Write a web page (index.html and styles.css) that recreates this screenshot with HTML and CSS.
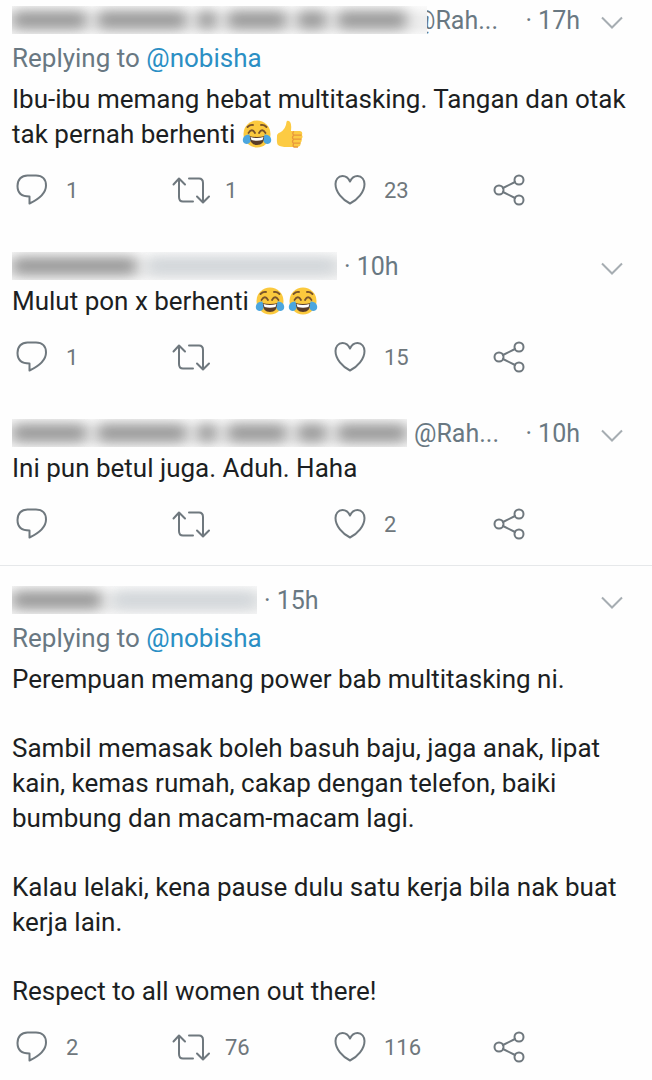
FILE: index.html
```html
<!DOCTYPE html>
<html lang="ms">
<head>
<meta charset="utf-8">
<meta name="viewport" content="width=device-width, initial-scale=1">
<title>Replies</title>
<link rel="stylesheet" href="styles.css">
</head>
<body>
<svg class="sprite" aria-hidden="true">
  <symbol id="reply" viewBox="0 0 40 36"><path d="M15.500 3.500H24C30.500 3.500 34 7.500 34 13.500C34 22 26 27.500 17.500 31.500V24.500C9 24.500 5.500 20 5.500 14C5.500 7.500 9.500 3.500 15.500 3.500Z"/></symbol>
  <symbol id="retweet" viewBox="0 0 40 36"><path d="M2.500 12.500L8 6.500L14 12.500M8 7V25Q8 29.500 12 29.500H22M18 6.500H28Q32 6.500 32 11V29M26 24.500L32 30.500L38 24.500"/></symbol>
  <symbol id="heart" viewBox="0 0 40 36"><path d="M20 9.500C22 5 25 4 27.500 4C32 4 34.500 8 34.500 12C34.500 20 27.500 28 20 31.500C12.500 28 5.500 20 5.500 12C5.500 8 8 4 12.500 4C15 4 18 5 20 9.500Z"/></symbol>
  <symbol id="share" viewBox="0 0 40 36"><circle cx="10" cy="18" r="4.500"/><circle cx="30" cy="8" r="4.500"/><circle cx="30" cy="28" r="4.500"/><path d="M14 16L26 10M14 20L26 26"/></symbol>
  <symbol id="chevron" viewBox="0 0 24 36"><path d="M2 15.500L12 25.500L22 15.500"/></symbol>
  <symbol id="joy" viewBox="0 0 30 30">
    <circle cx="15" cy="15" r="13.500" fill="#fbc93d"/>
    <path d="M5.500 8Q8 5.500 11 6M19 6Q22 5.500 24.500 8M6.500 14Q10 8.500 13 14M17 14Q20 8.500 23.500 14" fill="none" stroke="#79532b" stroke-width="1.800" stroke-linecap="round"/>
    <path d="M7 17Q15 19 23 17Q22 26 15 26Q8 26 7 17Z" fill="#593c29"/>
    <path d="M8.500 18Q15 20 21.500 18L20.500 21Q15 22.500 9.500 21Z" fill="#fff"/>
    <path d="M7.500 15.500C3 15 0 19 1 22.500C2 26 8 26 8.500 21.500Z" fill="#4ba6df"/>
    <path d="M22.500 15.500C27 15 30 19 29 22.500C28 26 22 26 21.500 21.500Z" fill="#4ba6df"/>
  </symbol>
  <symbol id="thumb" viewBox="0 0 30 30">
    <path d="M11.500 3Q12 1 14 2Q17 3.500 16 12H25Q28 12.500 27 16Q28.500 18 26.500 20Q27.500 22.500 25.500 24Q26 27.500 22.500 28H12Q6 28 3 26Q1.500 25 2 17Q2 14.500 5 13.500Q11 10 11.500 3Z" fill="#fccb43"/>
    <path d="M26.500 16.200H19Q16.500 14 19 12.500M26.500 20.200H18.500Q16.500 18.500 18.500 16.500M25.500 24.200H18.500Q16.500 22.500 18.500 20.500M18.500 24.500Q17.500 26.500 19 28H23" fill="none" stroke="#e8973b" stroke-width="1.300"/>
  </symbol>
</svg>
<main class="thread">
  <article class="tweet">
    <header class="head">
      <span class="redacted redacted-over"><i class="w75"></i><i class="w90"></i><i class="w20"></i><i class="w60"></i><i class="w30"></i><i class="w70"></i></span>
      <span class="handle">@Rah...</span>
      <span class="time time-end">· 17h</span>
      <button class="more" aria-label="More"><svg><use href="#chevron"/></svg></button>
    </header>
    <p class="replying">Replying to <a href="#">@nobisha</a></p>
    <div class="text"><p>Ibu-ibu memang hebat multitasking. Tangan dan otak tak pernah berhenti <svg class="emoji" role="img" aria-label="Tears of joy"><use href="#joy"/></svg><svg class="emoji" role="img" aria-label="Thumbs up"><use href="#thumb"/></svg></p></div>
    <div class="actions">
      <button aria-label="Reply"><svg><use href="#reply"/></svg><span>1</span></button>
      <button aria-label="Retweet"><svg><use href="#retweet"/></svg><span>1</span></button>
      <button aria-label="Like"><svg><use href="#heart"/></svg><span>23</span></button>
      <button aria-label="Share"><svg><use href="#share"/></svg></button>
    </div>
  </article>

  <article class="tweet">
    <header class="head">
      <span class="redacted"><i class="w125"></i><i class="w190 pale"></i></span>
      <span class="time">· 10h</span>
      <button class="more" aria-label="More"><svg><use href="#chevron"/></svg></button>
    </header>
    <div class="text"><p>Mulut pon x berhenti <svg class="emoji" role="img" aria-label="Tears of joy"><use href="#joy"/></svg><svg class="emoji" role="img" aria-label="Tears of joy"><use href="#joy"/></svg></p></div>
    <div class="actions">
      <button aria-label="Reply"><svg><use href="#reply"/></svg><span>1</span></button>
      <button aria-label="Retweet"><svg><use href="#retweet"/></svg></button>
      <button aria-label="Like"><svg><use href="#heart"/></svg><span>15</span></button>
      <button aria-label="Share"><svg><use href="#share"/></svg></button>
    </div>
  </article>

  <article class="tweet tweet-last">
    <header class="head">
      <span class="redacted"><i class="w75"></i><i class="w90"></i><i class="w20"></i><i class="w60"></i><i class="w30"></i><i class="w70"></i></span>
      <span class="handle">@Rah...</span>
      <span class="time time-end">· 10h</span>
      <button class="more" aria-label="More"><svg><use href="#chevron"/></svg></button>
    </header>
    <div class="text"><p>Ini pun betul juga. Aduh. Haha</p></div>
    <div class="actions">
      <button aria-label="Reply"><svg><use href="#reply"/></svg></button>
      <button aria-label="Retweet"><svg><use href="#retweet"/></svg></button>
      <button aria-label="Like"><svg><use href="#heart"/></svg><span>2</span></button>
      <button aria-label="Share"><svg><use href="#share"/></svg></button>
    </div>
  </article>

  <article class="tweet">
    <header class="head">
      <span class="redacted"><i class="w90"></i><i class="w145 pale"></i></span>
      <span class="time">· 15h</span>
      <button class="more" aria-label="More"><svg><use href="#chevron"/></svg></button>
    </header>
    <p class="replying">Replying to <a href="#">@nobisha</a></p>
    <div class="text">
      <p>Perempuan memang power bab multitasking ni.</p>
      <p>Sambil memasak boleh basuh baju, jaga anak, lipat kain, kemas rumah, cakap dengan telefon, baiki bumbung dan macam-macam lagi.</p>
      <p>Kalau lelaki, kena pause dulu satu kerja bila nak buat kerja lain.</p>
      <p>Respect to all women out there!</p>
    </div>
    <div class="actions">
      <button aria-label="Reply"><svg><use href="#reply"/></svg><span>2</span></button>
      <button aria-label="Retweet"><svg><use href="#retweet"/></svg><span>76</span></button>
      <button aria-label="Like"><svg><use href="#heart"/></svg><span>116</span></button>
      <button aria-label="Share"><svg><use href="#share"/></svg></button>
    </div>
  </article>
</main>
</body>
</html>
```
FILE: styles.css
```css
* { box-sizing: border-box; }

body {
  margin: 0;
  background: #fefefe;
  color: #1c1f22;
  font-family: Roboto, "Liberation Sans", sans-serif;
  font-size: 26px;
  line-height: 35px;
}

p { margin: 0; }

button {
  padding: 0;
  border: 0;
  background: none;
  color: inherit;
  font: inherit;
  cursor: pointer;
}

.sprite {
  position: absolute;
  width: 0;
  height: 0;
}

.thread { padding-top: 2px; }

.tweet {
  padding: 0 4px 40px 12px;
}

.tweet-last {
  padding-bottom: 23px;
  border-bottom: 1px solid #e6e8ea;
}

.tweet-last + .tweet {
  padding-top: 16px;
  padding-bottom: 0;
}

.head {
  display: flex;
  align-items: center;
  height: 36px;
  padding-right: 24px;
  color: #697882;
  font-size: 25px;
}

.redacted {
  display: flex;
  align-items: center;
  gap: 10px;
  flex: none;
  height: 28px;
  margin-right: 7px;
  overflow: hidden;
  background: linear-gradient(#fafafa, #eeeeee 40%, #eeeeee 75%, #f6f6f6);
}

.redacted i {
  height: 16px;
  border-radius: 6px;
  background: #8e8e8e;
  filter: blur(7px);
}

.redacted .pale { background: #ced3d7; }

.redacted-over {
  z-index: 1;
  padding-right: 20px;
  margin-right: -14px;
}

.w20 { width: 20px; }
.w30 { width: 30px; }
.w60 { width: 60px; }
.w70 { width: 70px; }
.w75 { width: 75px; }
.w90 { width: 90px; }
.w125 { width: 125px; }
.w145 { width: 145px; }
.w190 { width: 190px; }

.time-end { margin-left: auto; }

.more {
  display: flex;
  margin-left: auto;
}

.time-end + .more { margin-left: 20px; }

.more svg {
  width: 24px;
  height: 36px;
  fill: none;
  stroke: #a6adb2;
  stroke-width: 2;
}

.replying {
  margin: 2px 0 6px;
  line-height: 36px;
  color: #697882;
}

.replying a {
  color: #2b8fc4;
  text-decoration: none;
}

.text {
  display: grid;
  gap: 34px;
  padding-right: 12px;
}

.emoji {
  width: 30px;
  height: 30px;
  margin-right: 3px;
  vertical-align: -6px;
}

.actions {
  display: grid;
  grid-template-columns: repeat(4, 1fr);
  margin-top: 20px;
  color: #6f777c;
  font-size: 22px;
}

.actions button {
  display: flex;
  align-items: center;
  gap: 14px;
  height: 36px;
}

.actions svg {
  width: 40px;
  height: 36px;
  fill: none;
  stroke: #6f787e;
  stroke-width: 2;
  stroke-linejoin: round;
  stroke-linecap: round;
}
```
